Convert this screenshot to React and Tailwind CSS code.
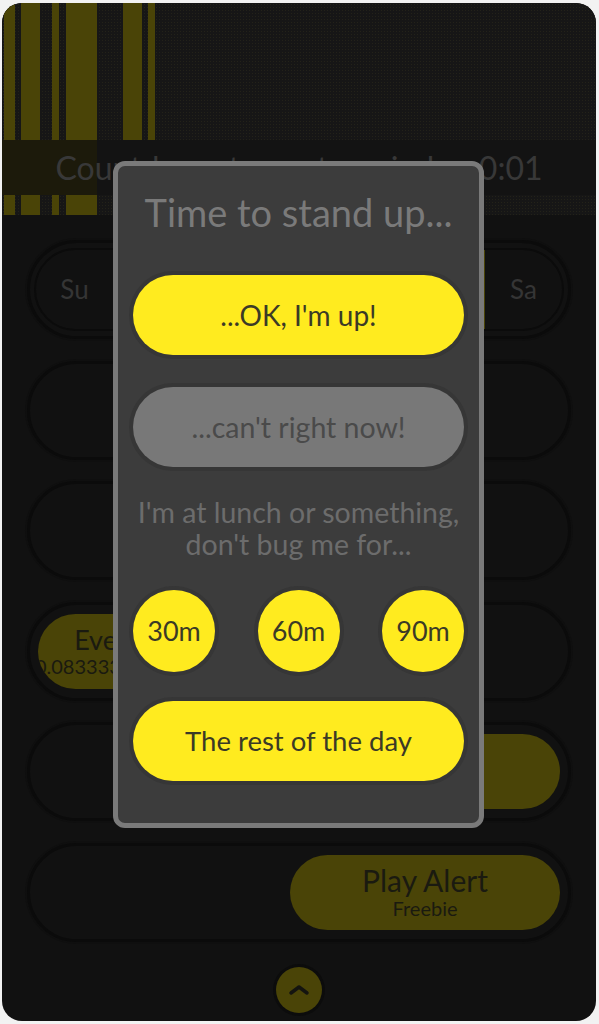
import React from "react";

const DIM = "#4a4407";

function Bars({ bars, h }) {
  return (
    <svg width="594" height={h} className="block absolute left-0 top-0">
      {bars.map(([x, w], i) => (
        <rect key={i} x={x} y={0} width={w} height={h} fill={DIM} />
      ))}
    </svg>
  );
}

const topBars = [
  [2, 11],
  [19, 19],
  [50, 7],
  [64, 31],
  [121, 19],
  [146, 7],
];
const lowBars = topBars.slice(0, 4);

function Row({ children, className = "" }) {
  return (
    <div
      className={
        "h-[99px] rounded-full border-[3px] border-[#0b0b0b] shadow-[0_0_0_2px_#0f0f0f] flex items-center relative overflow-hidden " +
        className
      }
    >
      {children}
    </div>
  );
}

export default function App() {
  return (
    <div className="w-[599px] h-[1024px] bg-[#f2f2f2] pt-[3px] px-[2px] relative overflow-hidden font-['Lato','Noto_Sans',sans-serif]">
      <div className="w-[594px] h-[1018px] rounded-[20px] bg-[#111111] overflow-hidden flex flex-col">
        {/* top chart */}
        <div className="h-[137px] relative bg-[#161616] bg-[radial-gradient(circle,#232219_0.5px,transparent_0.8px)] bg-[length:3px_3px]">
          <Bars bars={topBars} h={137} />
        </div>
        {/* band */}
        <div className="h-[55px] relative bg-[#131313]">
          <div className="absolute left-0 top-0 w-[95px] h-full bg-[#1c1a0b]" />
          <div className="relative h-full flex items-center justify-center text-[32px] leading-none text-[#383838] whitespace-nowrap">
            Countdown to next reminder: 0:01
          </div>
        </div>
        <div className="h-[20px] relative bg-[#161616] bg-[radial-gradient(circle,#232219_0.5px,transparent_0.8px)] bg-[length:3px_3px]">
          <Bars bars={lowBars} h={20} />
        </div>

        {/* rows */}
        <div className="mt-[25px] px-[25px] flex flex-col gap-[21.6px]">
          <Row className="px-[4px]">
            <div className="flex w-full h-[83px] rounded-full border-2 border-[#0b0b0b] overflow-hidden">
              <div className="w-[77px] flex items-center justify-center text-[26px] text-[#353535]">Su</div>
              <div className="flex-1 bg-[#4a4407]" />
              <div className="w-[77px] flex items-center justify-center text-[26px] text-[#353535]">Sa</div>
            </div>
          </Row>
          <Row />
          <Row />
          <Row className="pl-[8px]">
            <div className="w-[262px] h-[75px] rounded-full bg-[#4a4407] flex flex-col items-center justify-center overflow-hidden text-[#1a1a10] whitespace-nowrap">
              <div className="text-[27px] leading-[30px]">Every 5 minutes</div>
              <div className="text-[20px] leading-[22px]">0.08333333333333333 hours</div>
            </div>
          </Row>
          <Row className="justify-end pr-[8px]">
            <div className="w-[270px] h-[75px] rounded-full bg-[#4a4407]" />
          </Row>
          <Row className="justify-end pr-[8px]">
            <div className="w-[270px] h-[75px] rounded-full bg-[#4a4407] flex flex-col items-center justify-center text-[#1a1a10]">
              <span className="text-[30px] leading-[32px]">Play Alert</span>
              <span className="text-[20px] leading-[24px]">Freebie</span>
            </div>
          </Row>
        </div>

        <div className="mt-[25px] mx-auto w-[46px] h-[46px] rounded-full bg-[#4a4407] shadow-[0_0_0_3px_#0c0c0c] flex items-center justify-center">
          <svg width="22" height="14" viewBox="0 0 22 14">
            <path d="M3 10 L11 4 L19 10" fill="none" stroke="#141410" strokeWidth="3.5" strokeLinecap="round" strokeLinejoin="round" />
          </svg>
        </div>
      </div>

      {/* modal */}
      <div className="absolute left-[113px] top-[161px] w-[371px] h-[667px] rounded-[12px] border-[5px] border-[#7a7a7a] bg-[#3c3c3c] px-[15px] flex flex-col items-stretch">
        <div className="mt-[23px] h-[46px] leading-[46px] text-center text-[38px] text-[#7a7a7a] whitespace-nowrap">
          Time to stand up...
        </div>
        <button className="mt-[40px] h-[80px] rounded-full bg-[#ffeb1f] shadow-[0_0_0_4px_#363636] text-[28px] text-[#3b3a26]">
          ...OK, I'm up!
        </button>
        <button className="mt-[32px] h-[80px] rounded-full bg-[#787878] shadow-[0_0_0_4px_#363636] text-[28.5px] text-[#4a4a4a]">
          ...can't right now!
        </button>
        <div className="mt-[29px] text-center text-[28.5px] leading-[32px] text-[#6c6c6c] whitespace-nowrap">
          I'm at lunch or something,
          <br />
          don't bug me for...
        </div>
        <div className="mt-[30px] flex justify-between">
          {["30m", "60m", "90m"].map((t) => (
            <button
              key={t}
              className="w-[82px] h-[82px] rounded-full bg-[#ffeb1f] shadow-[0_0_0_4px_#363636] text-[27px] text-[#3b3a26] flex items-center justify-center"
            >
              {t}
            </button>
          ))}
        </div>
        <button className="mt-[29px] h-[80px] rounded-full bg-[#ffeb1f] shadow-[0_0_0_4px_#363636] text-[27.5px] text-[#3b3a26]">
          The rest of the day
        </button>
      </div>
    </div>
  );
}
